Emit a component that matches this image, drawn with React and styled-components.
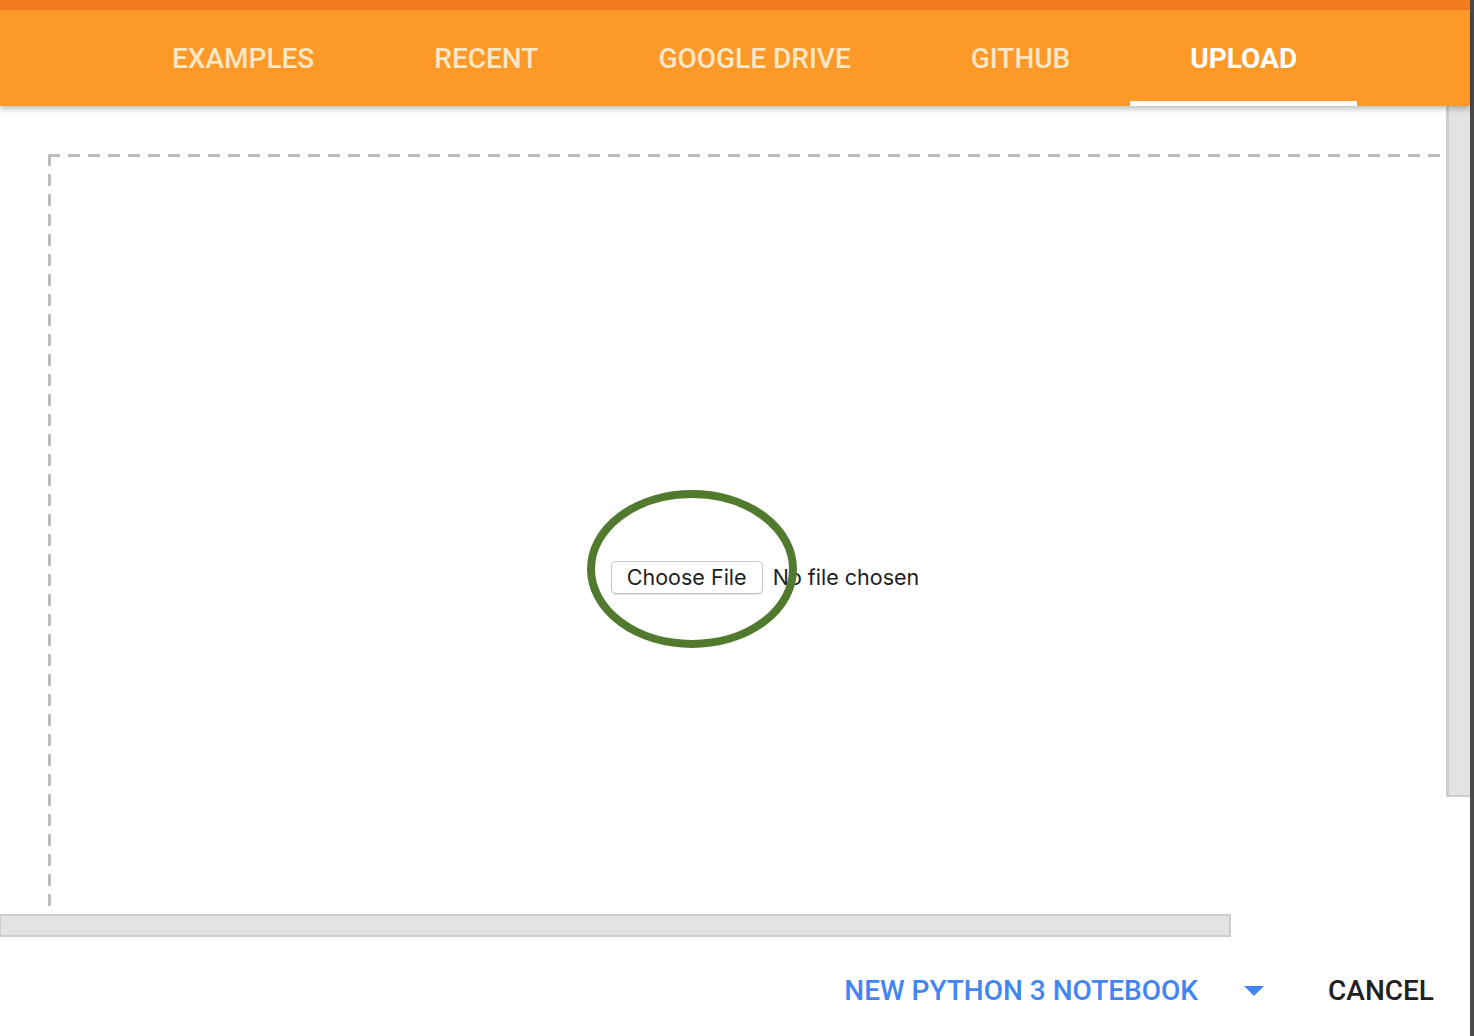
import React from "react";
import styled, { createGlobalStyle } from "styled-components";

const GlobalStyle = createGlobalStyle`
  html, body {
    margin: 0;
    padding: 0;
    background: #ffffff;
    overflow: hidden;
  }
  * { box-sizing: border-box; }
`;

const Screen = styled.div`
  width: 1474px;
  height: 1036px;
  display: flex;
  font-family: Roboto, "Liberation Sans", sans-serif;
`;

const Dialog = styled.div`
  width: 1470px;
  height: 100%;
  display: flex;
  flex-direction: column;
  background: #ffffff;
`;

const DarkEdge = styled.div`
  width: 4px;
  height: 100%;
  background: #4a4a4a;
`;

// orange tab bar
const TopStrip = styled.div`
  height: 10px;
  background: #f37b22;
`;

const TabBar = styled.nav`
  position: relative;
  z-index: 2;
  height: 96px;
  display: flex;
  align-items: stretch;
  padding-left: 112px;
  background: #fd9929;
  box-shadow: 0 3px 6px rgba(0, 0, 0, 0.25);
`;

const Tab = styled.div`
  display: flex;
  align-items: center;
  padding: 0 60px;
  padding-top: 6px;
  font-size: 28px;
  font-weight: ${(p) => (p.$active ? 700 : 500)};
  color: ${(p) => (p.$active ? "#ffffff" : "rgba(255, 246, 225, 0.85)")};
  border-bottom: 5px solid ${(p) => (p.$active ? "#ffffff" : "transparent")};
`;

// body with fake scrollbars
const Body = styled.div`
  display: flex;
  height: 808px;
`;

const ScrollView = styled.div`
  width: 1446px;
  height: 100%;
  overflow: hidden;
  padding: 48px 0 0 48px;
`;

const DropZone = styled.div`
  width: 1436px;
  height: 848px;
  display: flex;
  align-items: center;
  justify-content: center;
  background-image:
    repeating-linear-gradient(90deg, #bdbdbd 0 12px, transparent 12px 20px),
    repeating-linear-gradient(180deg, #bdbdbd 0 12px, transparent 12px 20px);
  background-size: 100% 3px, 3px 100%;
  background-position: 0 0, 0 0;
  background-repeat: no-repeat;
`;

const FilePicker = styled.div`
  position: relative;
  display: flex;
  align-items: center;
  gap: 10px;
  margin: 0 0 2px -2px;
  font-family: Inter, "Open Sans", sans-serif;
  font-size: 21.5px;
  color: #1e1e1e;
`;

const ChooseButton = styled.button`
  height: 33px;
  width: 152px;
  padding: 0;
  border: 1px solid #c6c6c6;
  border-radius: 5px;
  background: #ffffff;
  box-shadow: 0 1px 1px rgba(0, 0, 0, 0.12);
  font-family: inherit;
  font-size: 21.5px;
  color: #1e1e1e;
`;

const FileStatus = styled.span`
  white-space: nowrap;
`;

const Circle = styled.svg`
  position: absolute;
  left: -25px;
  top: -72px;
  pointer-events: none;
`;

const VTrack = styled.div`
  width: 24px;
  height: 691px;
  background: #e3e3e3;
  border-left: 3px solid #cdcdcd;
  border-bottom: 2px solid #cdcdcd;
`;

const HTrack = styled.div`
  width: 1231px;
  height: 23px;
  background: #e3e3e3;
  border: 2px solid #cdcdcd;
  border-left-width: 1px;
`;

// footer actions
const Footer = styled.div`
  flex: 1;
  display: flex;
  align-items: center;
  justify-content: flex-end;
  padding: 8px 36px 0 0;
`;

const ActionText = styled.span`
  font-size: 28px;
  font-weight: 500;
  color: ${(p) => p.$color || "#212121"};
`;

const Caret = styled.span`
  width: 0;
  height: 0;
  margin: 0 64px 0 46px;
  border-left: 10px solid transparent;
  border-right: 10px solid transparent;
  border-top: 10px solid #4285f4;
`;

const tabs = ["EXAMPLES", "RECENT", "GOOGLE DRIVE", "GITHUB", "UPLOAD"];

export default function App() {
  return (
    <>
      <GlobalStyle />
      <Screen>
        <Dialog>
          <TopStrip />
          <TabBar>
            {tabs.map((t) => (
              <Tab key={t} $active={t === "UPLOAD"}>
                {t}
              </Tab>
            ))}
          </TabBar>
          <Body>
            <ScrollView>
              <DropZone>
                <FilePicker>
                  <ChooseButton>Choose File</ChooseButton>
                  <FileStatus>No file chosen</FileStatus>
                  <Circle width="212" height="162" viewBox="0 0 212 162">
                    <ellipse
                      cx="106"
                      cy="80"
                      rx="101"
                      ry="75"
                      fill="none"
                      stroke="#527a2e"
                      strokeWidth="8"
                    />
                  </Circle>
                </FilePicker>
              </DropZone>
            </ScrollView>
            <VTrack />
          </Body>
          <HTrack />
          <Footer>
            <ActionText $color="#4285f4">NEW PYTHON 3 NOTEBOOK</ActionText>
            <Caret />
            <ActionText>CANCEL</ActionText>
          </Footer>
        </Dialog>
        <DarkEdge />
      </Screen>
    </>
  );
}
